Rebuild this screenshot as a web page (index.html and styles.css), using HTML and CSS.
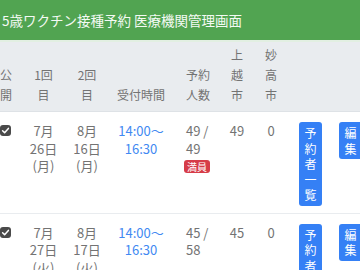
FILE: index.html
```html
<!DOCTYPE html>
<html lang="ja">

<head>
  <meta charset="UTF-8">
  <meta name="viewport" content="width=device-width, initial-scale=1.0">
  <title>5歳ワクチン接種予約 医療機関管理画面</title>
  <link rel="stylesheet" href="styles.css">
</head>

<body>
  <header class="topbar">5歳ワクチン接種予約 医療機関管理画面</header>

  <table class="slots">
    <colgroup>
      <col class="c-pub">
      <col class="c-day">
      <col class="c-day2">
      <col class="c-time">
      <col class="c-count">
      <col class="c-city">
      <col class="c-city2">
      <col class="c-list">
      <col class="c-edit">
    </colgroup>
    <thead>
      <tr>
        <th class="left">公<br>開</th>
        <th>1回<br>目</th>
        <th>2回<br>目</th>
        <th>受付時間</th>
        <th class="count">予約<br>人数</th>
        <th>上<br>越<br>市</th>
        <th>妙<br>高<br>市</th>
        <th></th>
        <th></th>
      </tr>
    </thead>
    <tbody>
      <tr>
        <td class="left"><span class="check"><svg viewBox="0 0 11 11" width="11" height="11"><path d="M2.6 5.7 L4.6 7.7 L8.4 3.4" fill="none" stroke="#fff" stroke-width="1.5" stroke-linecap="round" stroke-linejoin="round"/></svg></span></td>
        <td>7月<br>26日<br>(月)</td>
        <td>8月<br>16日<br>(月)</td>
        <td class="time">14:00〜<br>16:30</td>
        <td class="count">49 /<br>49<br><span class="badge">満員</span></td>
        <td>49</td>
        <td>0</td>
        <td class="btn-cell"><a class="btn">予約者一覧</a></td>
        <td class="btn-cell edit"><a class="btn">編集</a></td>
      </tr>
      <tr>
        <td class="left"><span class="check"><svg viewBox="0 0 11 11" width="11" height="11"><path d="M2.6 5.7 L4.6 7.7 L8.4 3.4" fill="none" stroke="#fff" stroke-width="1.5" stroke-linecap="round" stroke-linejoin="round"/></svg></span></td>
        <td>7月<br>27日<br>(火)</td>
        <td>8月<br>17日<br>(火)</td>
        <td class="time">14:00〜<br>16:30</td>
        <td class="count">45 /<br>58</td>
        <td>45</td>
        <td>0</td>
        <td class="btn-cell"><a class="btn">予約者一覧</a></td>
        <td class="btn-cell edit"><a class="btn">編集</a></td>
      </tr>
    </tbody>
  </table>
</body>
</html>
```

FILE: styles.css
```css
html, body {
  margin: 0;
  padding: 0;
  overflow: hidden;
  background-color: #fff;
  font-family: "Noto Sans CJK JP", "Noto Sans", sans-serif;
}

.topbar {
  height: 40px;
  line-height: 41px;
  padding-left: 2px;
  background-color: #51a451;
  color: #f4faf4;
  font-size: 13.5px;
  white-space: nowrap;
  border-bottom: 2px solid #e2efe2;
}

.slots {
  table-layout: fixed;
  width: 380px;
  border-collapse: collapse;
  color: #737373;
}

.c-pub { width: 22px; }
.c-day { width: 43px; }
.c-day2 { width: 44px; }
.c-time { width: 64px; }
.c-count { width: 49px; }
.c-city { width: 30px; }
.c-city2 { width: 38px; }
.c-list { width: 42px; }
.c-edit { width: 48px; }

.slots th {
  background-color: #e9ecef;
  font-size: 12px;
  font-weight: normal;
  line-height: 20px;
  padding: 3px 0 6px;
  vertical-align: bottom;
  border-bottom: 1px solid #dee2e6;
}

.slots td {
  font-size: 13px;
  line-height: 17.5px;
  padding: 10px 0 7px;
  text-align: center;
  vertical-align: top;
  border-bottom: 1px solid #e9ecef;
}

.slots .left {
  text-align: left;
}

.slots .count {
  text-align: left;
  padding-left: 13px;
}

.slots .time {
  color: #4189f2;
}

.check {
  display: block;
  width: 11px;
  height: 11px;
  margin-top: 3px;
  border-radius: 3px;
  background-color: #4a4a4a;
}

.check svg {
  display: block;
}

.badge {
  display: inline-block;
  margin-top: 3px;
  margin-left: -2px;
  padding: 0 3px;
  background-color: #d63c48;
  color: #fff;
  font-size: 10px;
  line-height: 13px;
  border-radius: 3px;
}

.slots .btn-cell {
  text-align: left;
  padding-left: 9px;
}

.slots .btn-cell.edit {
  padding-left: 7px;
}

.btn {
  display: block;
  width: 23px;
  box-sizing: border-box;
  padding: 3px 5px;
  background-color: #3580f5;
  color: #fff;
  font-size: 12px;
  line-height: 15.5px;
  text-align: center;
  border-radius: 3px;
  word-break: break-all;
}
```
